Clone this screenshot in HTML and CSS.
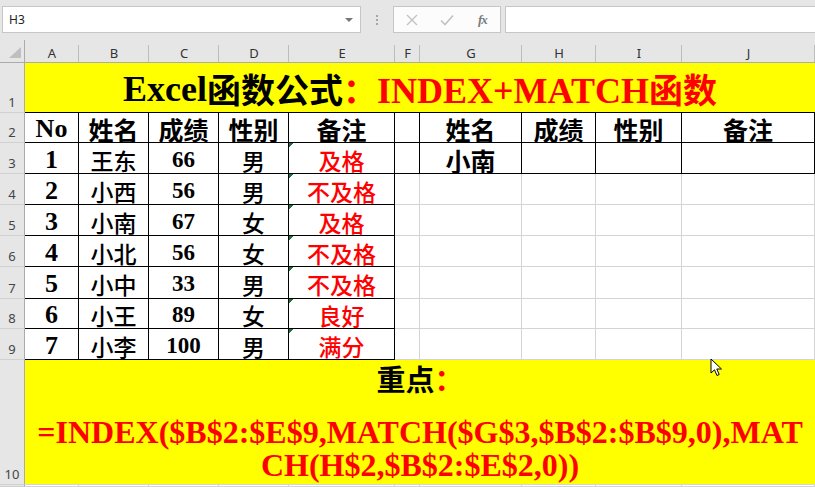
FILE: index.html
```html
<!DOCTYPE html>
<html lang="zh-CN">
  <head>
    <meta charset="utf-8" />
    <title>INDEX+MATCH</title>
    <link rel="stylesheet" href="styles.css">
  </head>
  <body>
    <div class="formula-bar">
      <div class="name-box">
        <span>H3</span>
        <span class="drop"></span>
      </div>
      <div class="grip"><i></i><i></i><i></i></div>
      <div class="fx-box">
        <span class="fx-btn">
          <svg width="12" height="12" viewBox="0 0 12 12"><path d="M1 1 L11 11 M11 1 L1 11" stroke="#c2c2c2" stroke-width="1.4" fill="none"/></svg>
        </span>
        <span class="fx-btn">
          <svg width="14" height="12" viewBox="0 0 14 12"><path d="M1 6.5 L5 10.5 L13 1.5" stroke="#c2c2c2" stroke-width="1.6" fill="none"/></svg>
        </span>
        <span class="fx-btn fx">fx</span>
      </div>
      <div class="formula-input"></div>
    </div>

    <div class="sheet">
      <!-- column headers -->
      <div class="corner"><span class="corner-tri"></span></div>
      <div class="ch">A</div>
      <div class="ch">B</div>
      <div class="ch">C</div>
      <div class="ch">D</div>
      <div class="ch">E</div>
      <div class="ch">F</div>
      <div class="ch">G</div>
      <div class="ch">H</div>
      <div class="ch">I</div>
      <div class="ch">J</div>

      <!-- row 1 -->
      <div class="rh">1</div>
      <div class="cell title">Excel<span class="zh">函数公式</span><span class="red"><span class="zh">：</span>INDEX+MATCH<span class="zh">函数</span></span></div>

      <!-- row 2 -->
      <div class="rh">2</div>
      <div class="cell b no">No</div>
      <div class="cell b hd">姓名</div>
      <div class="cell b hd">成绩</div>
      <div class="cell b hd">性别</div>
      <div class="cell b hd">备注</div>
      <div class="cell b"></div>
      <div class="cell b hd">姓名</div>
      <div class="cell b hd">成绩</div>
      <div class="cell b hd">性别</div>
      <div class="cell b hd">备注</div>

      <!-- row 3 -->
      <div class="rh">3</div>
      <div class="cell b no">1</div>
      <div class="cell b cn">王东</div>
      <div class="cell b score">66</div>
      <div class="cell b cn">男</div>
      <div class="cell b cn red flag">及格</div>
      <div class="cell b"></div>
      <div class="cell b hd">小南</div>
      <div class="cell b"></div>
      <div class="cell b"></div>
      <div class="cell b"></div>

      <!-- row 4 -->
      <div class="rh">4</div>
      <div class="cell b no">2</div>
      <div class="cell b cn">小西</div>
      <div class="cell b score">56</div>
      <div class="cell b cn">男</div>
      <div class="cell b cn red flag">不及格</div>
      <div class="cell"></div><div class="cell"></div><div class="cell"></div><div class="cell"></div><div class="cell"></div>

      <!-- row 5 -->
      <div class="rh">5</div>
      <div class="cell b no">3</div>
      <div class="cell b cn">小南</div>
      <div class="cell b score">67</div>
      <div class="cell b cn">女</div>
      <div class="cell b cn red flag">及格</div>
      <div class="cell"></div><div class="cell"></div><div class="cell"></div><div class="cell"></div><div class="cell"></div>

      <!-- row 6 -->
      <div class="rh">6</div>
      <div class="cell b no">4</div>
      <div class="cell b cn">小北</div>
      <div class="cell b score">56</div>
      <div class="cell b cn">女</div>
      <div class="cell b cn red flag">不及格</div>
      <div class="cell"></div><div class="cell"></div><div class="cell"></div><div class="cell"></div><div class="cell"></div>

      <!-- row 7 -->
      <div class="rh">7</div>
      <div class="cell b no">5</div>
      <div class="cell b cn">小中</div>
      <div class="cell b score">33</div>
      <div class="cell b cn">男</div>
      <div class="cell b cn red flag">不及格</div>
      <div class="cell"></div><div class="cell"></div><div class="cell"></div><div class="cell"></div><div class="cell"></div>

      <!-- row 8 -->
      <div class="rh">8</div>
      <div class="cell b no">6</div>
      <div class="cell b cn">小王</div>
      <div class="cell b score">89</div>
      <div class="cell b cn">女</div>
      <div class="cell b cn red flag">良好</div>
      <div class="cell"></div><div class="cell"></div><div class="cell"></div><div class="cell"></div><div class="cell"></div>

      <!-- row 9 -->
      <div class="rh">9</div>
      <div class="cell b no">7</div>
      <div class="cell b cn">小李</div>
      <div class="cell b score">100</div>
      <div class="cell b cn">男</div>
      <div class="cell b cn red flag">满分</div>
      <div class="cell"></div><div class="cell"></div><div class="cell"></div><div class="cell"></div><div class="cell"></div>

      <!-- row 10 -->
      <div class="rh">10</div>
      <div class="cell note">
        <div class="key">重点<span class="red">：</span></div>
        <div class="formula red">=INDEX($B$2:$E$9,MATCH($G$3,$B$2:$B$9,0),MAT<br>CH(H$2,$B$2:$E$2,0))</div>
        <svg class="pointer" width="14" height="20" viewBox="0 0 14 20"><path d="M1 1 L1 15 L4.5 11.8 L7 17.5 L9.2 16.5 L6.8 11 L11.5 11 Z" fill="#fff" stroke="#000" stroke-width="1"/></svg>
      </div>

      <!-- row 11 -->
      <div class="rh"></div>
      <div class="cell"></div><div class="cell"></div><div class="cell"></div><div class="cell"></div><div class="cell"></div>
      <div class="cell"></div><div class="cell"></div><div class="cell"></div><div class="cell"></div><div class="cell"></div>
    </div>
  </body>
</html>
```

FILE: styles.css
```css
* {
  margin: 0;
  padding: 0;
  box-sizing: border-box;
}

body {
  width: 815px;
  height: 487px;
  overflow: hidden;
  background: #e6e6e6;
  font-family: "Noto Sans", "Liberation Sans", sans-serif;
  color: #444;
}

/* formula bar */
.formula-bar {
  display: flex;
  height: 40px;
  padding: 6px 0 0 2px;
  background: #e6e6e6;
}

.name-box {
  width: 359px;
  height: 27px;
  background: #fff;
  border: 1px solid #c6c6c6;
  display: flex;
  align-items: center;
  justify-content: space-between;
  padding: 0 6px 0 6px;
  font-size: 12px;
  color: #222;
}

.drop {
  width: 0;
  height: 0;
  border-left: 4px solid transparent;
  border-right: 4px solid transparent;
  border-top: 4px solid #777;
  margin-right: 1px;
}

.grip {
  width: 32px;
  height: 27px;
  display: flex;
  flex-direction: column;
  align-items: center;
  justify-content: center;
  gap: 2px;
}

.grip i {
  width: 2px;
  height: 2px;
  background: #a6a6a6;
}

.fx-box {
  width: 108px;
  height: 27px;
  background: #fcfcfc;
  border: 1px solid #c6c6c6;
  display: flex;
  align-items: center;
}

.fx-btn {
  width: 36px;
  display: flex;
  justify-content: center;
  align-items: center;
}

.fx {
  font-family: "Liberation Serif", serif;
  font-style: italic;
  font-weight: bold;
  font-size: 13px;
  color: #7b7b7b;
  letter-spacing: -1px;
}

.formula-input {
  flex: 1;
  height: 27px;
  margin-left: 4px;
  background: #fff;
  border: 1px solid #c6c6c6;
  border-right: none;
}

/* sheet grid */
.sheet {
  display: grid;
  grid-template-columns: 25px 54px 70px 70px 70px 106px 25px 102px 74px 86px 133px;
  grid-template-rows: 23px 50px 30px 31px 31px 31px 31px 32px 30px 31px 125px 2px;
  background: #fff;
}

.corner {
  background: #e6e6e6;
  border-right: 1px solid #ababab;
  border-bottom: 1px solid #ababab;
  display: flex;
  justify-content: flex-end;
  align-items: flex-end;
  padding: 0 3px 4px 0;
}

.corner-tri {
  width: 12px;
  height: 11px;
  background: #bfbfbf;
  clip-path: polygon(100% 0, 100% 100%, 0 100%);
}

.ch {
  background: #e6e6e6 linear-gradient(#bdbdbd, #bdbdbd) right bottom / 1px 17px no-repeat;
  border-bottom: 1px solid #ababab;
  display: flex;
  align-items: center;
  justify-content: center;
  padding-top: 3px;
  font-size: 13px;
  color: #333;
}

.rh {
  background: #e6e6e6;
  border-right: 1px solid #ababab;
  border-bottom: 1px solid #d0d0d0;
  display: flex;
  align-items: flex-end;
  justify-content: center;
  padding-bottom: 1px;
  font-size: 13px;
  color: #444;
  overflow: hidden;
}

.cell {
  border-right: 1px solid #d4d4d4;
  border-bottom: 1px solid #d4d4d4;
  display: flex;
  align-items: center;
  justify-content: center;
  font-family: "Liberation Serif", "Noto Sans CJK SC", serif;
  font-weight: bold;
  color: #000;
  white-space: nowrap;
}

.cell.b {
  border-right-color: #000;
  border-bottom-color: #000;
  padding-top: 3px;
}

.title {
  grid-column: 2 / -1;
  background: #ffff00;
  border-right: none;
  border-bottom: 1px solid #000;
  font-size: 36px;
  padding-top: 2px;
}

.title .zh {
  font-size: 34px;
}

.red {
  color: #ff0000;
}

.no {
  font-size: 26px;
}

.hd {
  font-size: 25px;
  font-weight: 700;
}

.score {
  font-size: 23px;
}

.cn {
  font-size: 23px;
  font-weight: 500;
}

.flag {
  background: linear-gradient(135deg, #1e7145 0, #1e7145 3px, transparent 3px) no-repeat;
}

/* row 10 note */
.note {
  grid-column: 2 / -1;
  background: #ffff00;
  border-right: none;
  flex-direction: column;
  justify-content: flex-start;
  position: relative;
}

.key {
  font-size: 29px;
  line-height: 42px;
  margin-bottom: 14px;
}

.formula {
  font-size: 32px;
  line-height: 33px;
  text-align: center;
}

.pointer {
  position: absolute;
  left: 685px;
  top: -2px;
}
```
